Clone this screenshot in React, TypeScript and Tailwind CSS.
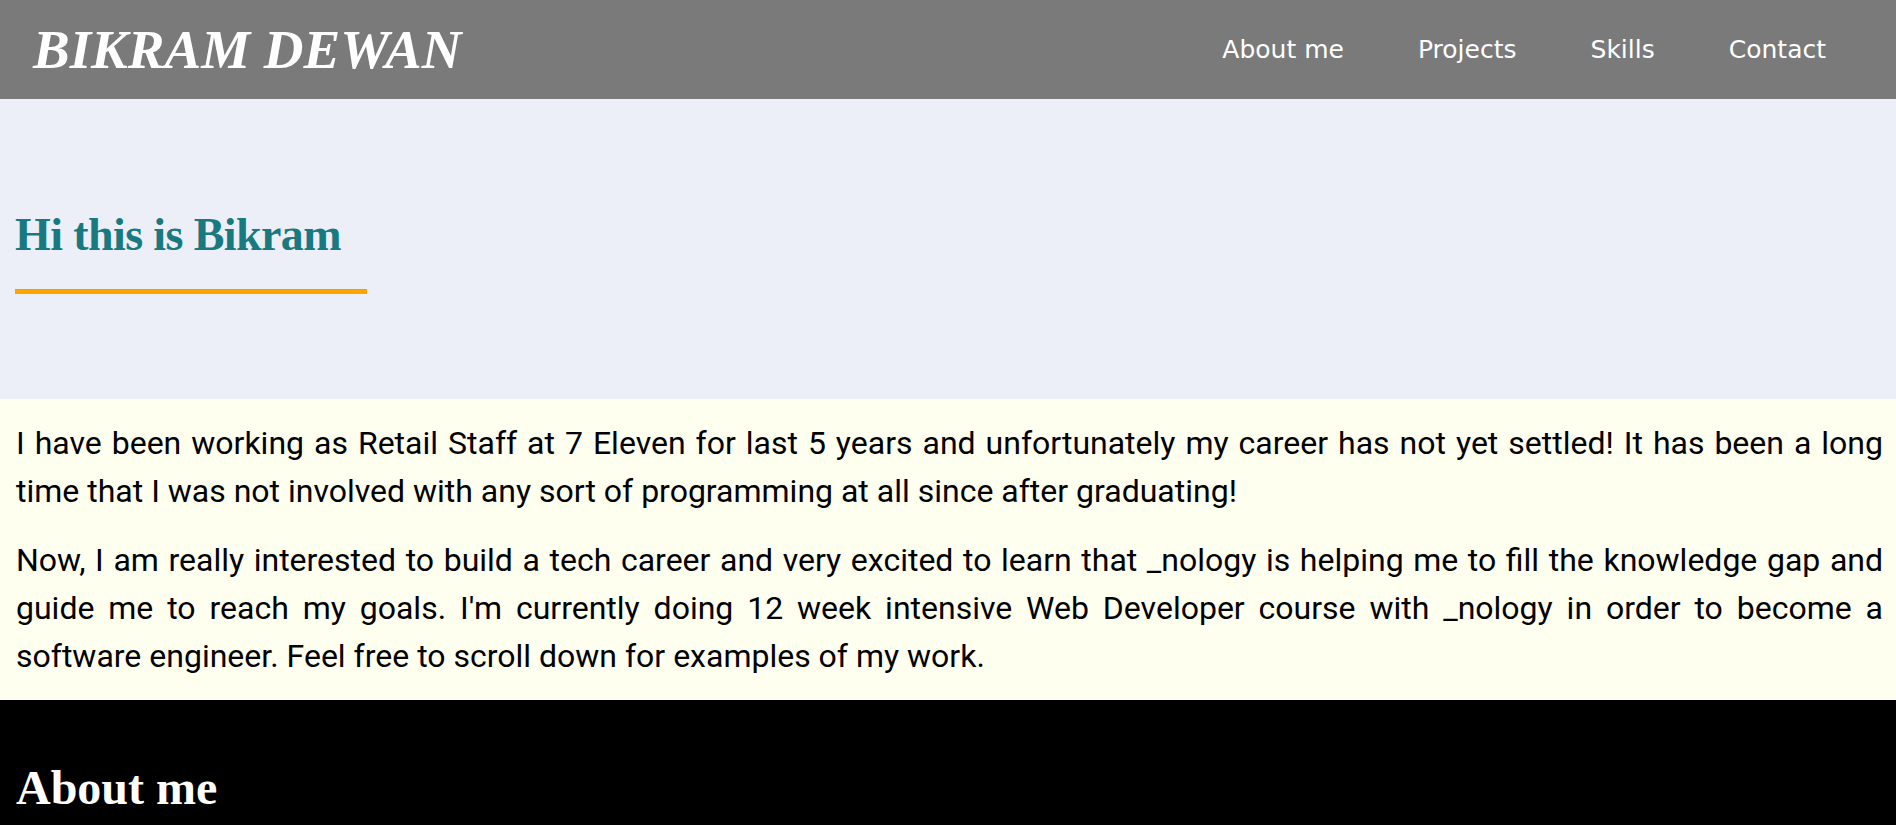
export default function App() {
  const navLinks = ["About me", "Projects", "Skills", "Contact"];

  return (
    <div className="w-full min-h-screen bg-black">
      {/* Header */}
      <header className="h-[99px] bg-[#7a7a7a] flex items-center justify-between pl-[33px] pr-[70px]">
        <h1 className="font-['Liberation_Serif',serif] italic font-bold text-[55px] leading-[55px] text-white">
          BIKRAM DEWAN
        </h1>
        <nav className="flex items-center gap-[74px]">
          {navLinks.map((link) => (
            <a
              key={link}
              href="#"
              className="font-['DejaVu_Sans',sans-serif] text-[25px] leading-[30px] text-white"
            >
              {link}
            </a>
          ))}
        </nav>
      </header>

      {/* Hero */}
      <section className="h-[300px] bg-[#eceff8] pt-[113px] pl-[15px]">
        <h2 className="font-['Liberation_Serif',serif] font-bold text-[46px] leading-[46px] tracking-[-0.6px] text-[#187a80]">
          Hi this is Bikram
        </h2>
        <div className="mt-[31px] w-[352px] h-[5px] bg-[#ffa500] border-t border-[#b0a890]"></div>
      </section>

      {/* Intro */}
      <section className="bg-[#fffff0] pl-4 pr-[13px] py-5 flex flex-col gap-[21px] font-['Roboto',sans-serif] text-[32px] leading-[48px] text-black text-justify">
        <p>
          I have been working as Retail Staff at 7 Eleven for last 5 years and unfortunately my
          career has not yet settled! It has been a long time that I was not involved with any
          sort of programming at all since after graduating!
        </p>
        <p>
          Now, I am really interested to build a tech career and very excited to learn that
          _nology is helping me to fill the knowledge gap and guide me to reach my goals. I'm
          currently doing 12 week intensive Web Developer course with _nology in order to become
          a software engineer. Feel free to scroll down for examples of my work.
        </p>
      </section>

      {/* About */}
      <section className="bg-black pt-16 pb-16 pl-4">
        <h2 className="font-['Liberation_Serif',serif] font-bold text-[48px] leading-[48px] text-white">
          About me
        </h2>
      </section>
    </div>
  );
}
